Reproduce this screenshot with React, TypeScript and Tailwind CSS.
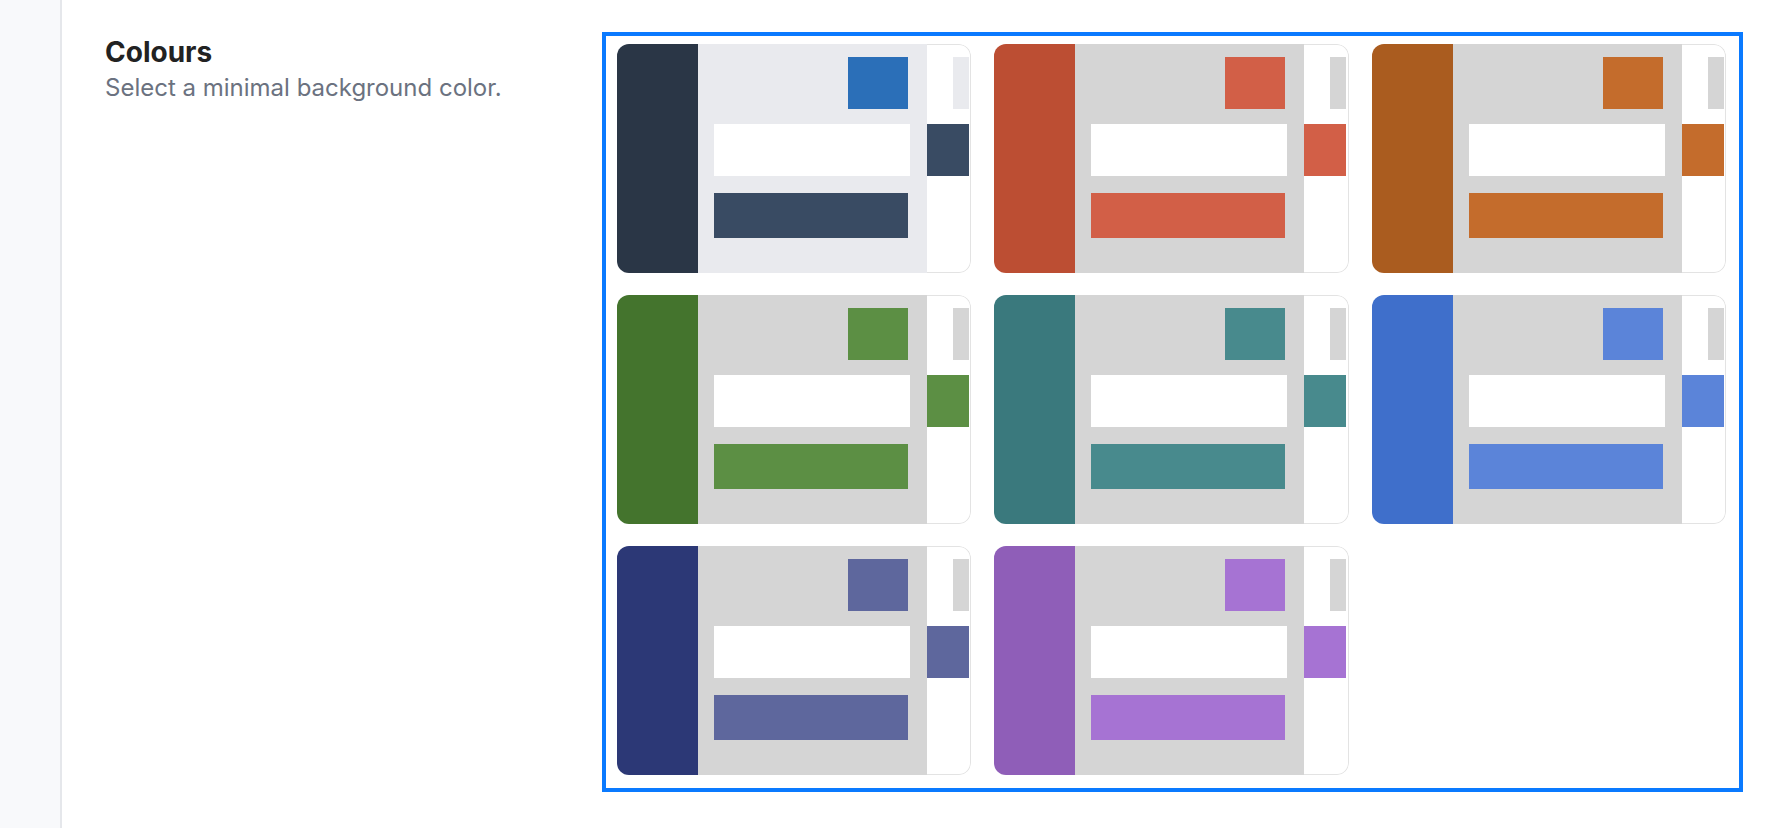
import React from "react";

type Theme = { strip: string; main: string; accent: string; square: string; bar: string };

const themes: Theme[] = [
  { strip: "bg-[#2a3646]", main: "bg-[#e9eaee]", accent: "bg-[#394b63]", square: "bg-[#2b6fb8]", bar: "bg-[#394b63]" },
  { strip: "bg-[#bc4e33]", main: "bg-[#d5d5d5]", accent: "bg-[#d25f47]", square: "bg-[#d25f47]", bar: "bg-[#d25f47]" },
  { strip: "bg-[#aa5c1f]", main: "bg-[#d5d5d5]", accent: "bg-[#c46c2c]", square: "bg-[#c46c2c]", bar: "bg-[#c46c2c]" },
  { strip: "bg-[#44742d]", main: "bg-[#d5d5d5]", accent: "bg-[#5c8f44]", square: "bg-[#5c8f44]", bar: "bg-[#5c8f44]" },
  { strip: "bg-[#3a797d]", main: "bg-[#d5d5d5]", accent: "bg-[#488a8d]", square: "bg-[#488a8d]", bar: "bg-[#488a8d]" },
  { strip: "bg-[#3f6fcb]", main: "bg-[#d5d5d5]", accent: "bg-[#5b84d9]", square: "bg-[#5b84d9]", bar: "bg-[#5b84d9]" },
  { strip: "bg-[#2c3876]", main: "bg-[#d5d5d5]", accent: "bg-[#5e679d]", square: "bg-[#5e679d]", bar: "bg-[#5e679d]" },
  { strip: "bg-[#8f5eb8]", main: "bg-[#d5d5d5]", accent: "bg-[#a673d3]", square: "bg-[#a673d3]", bar: "bg-[#a673d3]" },
];

function Card({ t }: { t: Theme }) {
  return (
    <div className="flex h-[229px] overflow-hidden rounded-[12px] bg-white">
      <div className={`w-[81px] shrink-0 ${t.strip}`} />
      <div className={`flex w-[229px] shrink-0 flex-col pl-[16px] pr-[17px] pt-[13px] ${t.main}`}>
        <div className={`ml-auto mr-[2px] h-[52px] w-[60px] ${t.square}`} />
        <div className="mt-[15px] h-[52px] w-full bg-white" />
        <div className={`mt-[17px] h-[45px] w-[194px] ${t.bar}`} />
      </div>
      <div className="flex flex-1 flex-col rounded-r-[12px] border-y border-r border-[#e3e3e3] pt-[12px]">
        <div className={`ml-[26px] h-[52px] w-[16px] ${t.main}`} />
        <div className={`mt-[15px] h-[52px] w-[42px] ${t.accent}`} />
      </div>
    </div>
  );
}

export default function App() {
  return (
    <div className="flex h-[828px] w-full bg-white font-['Inter','Liberation_Sans',sans-serif]">
      <aside className="w-[62px] shrink-0 border-r-2 border-[#e5e7eb] bg-[#f8f9fb]" />
      <main className="flex flex-1 pl-[43px] pt-[32px]">
        <div className="w-[497px] shrink-0 pt-[3px]">
          <h2 className="text-[28px] font-bold leading-[34px] text-[#222222]">Colours</h2>
          <p className="mt-[3px] text-[24px] leading-[32px] text-[#6b7280]">Select a minimal background color.</p>
        </div>
        <div className="h-fit w-[1141px] shrink-0 border-4 border-[#0a7aff] pb-[13px] pl-[11px] pr-[13px] pt-[8px]">
          <div className="grid grid-cols-3 gap-x-[23px] gap-y-[22px]">
            {themes.map((t, i) => (
              <Card key={i} t={t} />
            ))}
          </div>
        </div>
      </main>
    </div>
  );
}
